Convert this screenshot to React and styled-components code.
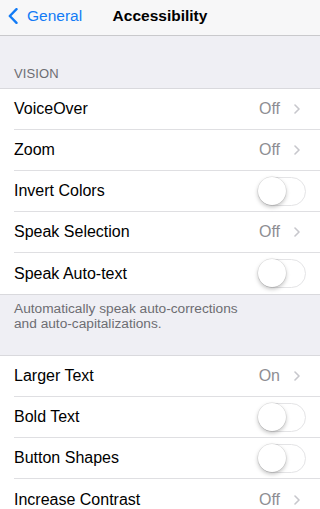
import React from "react";
import styled, { createGlobalStyle } from "styled-components";

const Global = createGlobalStyle`
  html, body { margin: 0; padding: 0; background: #efeff4; }
  body { font-family: "Liberation Sans", Arial, sans-serif; -webkit-font-smoothing: antialiased; }
  * { box-sizing: border-box; }
`;

const Screen = styled.div`
  width: 100%;
  height: 509px;
  overflow: hidden;
  background: #efeff4;
  display: flex;
  flex-direction: column;
  & > * { flex-shrink: 0; }
`;

const NavBar = styled.div`
  position: relative;
  height: 36px;
  background: #f7f7f8;
  border-bottom: 1px solid #c9c9cc;
  display: flex;
  align-items: center;
  padding: 0 0 3px 8px;
`;

const Back = styled.div`
  display: flex;
  align-items: center;
  gap: 9px;
  color: #127bf6;
  font-size: 15.5px;
`;

const Title = styled.div`
  position: absolute;
  left: 0;
  right: 0;
  top: 0;
  bottom: 3px;
  display: flex;
  align-items: center;
  justify-content: center;
  font-size: 15.5px;
  font-weight: bold;
  color: #000;
  pointer-events: none;
`;

const SectionHeader = styled.div`
  height: 52px;
  display: flex;
  align-items: flex-end;
  padding: 0 14px 7px;
  font-size: 13px;
  color: #6d6d72;
  letter-spacing: 0.1px;
`;

const Group = styled.div`
  background: #fff;
  border-top: 1px solid #d9d9dd;
  border-bottom: 1px solid #d9d9dd;
`;

const Row = styled.div`
  height: 41px;
  display: flex;
  align-items: center;
  padding-left: 14px;
`;

const RowInner = styled.div`
  flex: 1;
  height: 100%;
  display: flex;
  align-items: center;
  padding-right: 14px;
  border-bottom: ${(p) => (p.$last ? "none" : "1px solid #dfdfe2")};
`;

const Label = styled.div`
  flex: 1;
  font-size: 16px;
  color: #000;
`;

const Value = styled.div`
  font-size: 16px;
  color: #8e8e93;
  margin-right: 14px;
`;

const Chevron = styled.svg`
  width: 6px;
  height: 10px;
  margin-right: 6px;
  flex: none;
`;

const Toggle = styled.div`
  width: 48px;
  height: 29px;
  border-radius: 15px;
  border: 1.5px solid #e4e4e6;
  background: #fff;
  position: relative;
  flex: none;
`;

const Knob = styled.div`
  position: absolute;
  left: -1px;
  top: -1px;
  width: 28px;
  height: 28px;
  border-radius: 50%;
  background: #fff;
  box-shadow: 0 2px 4px rgba(0, 0, 0, 0.25), 0 0 0 0.5px rgba(0, 0, 0, 0.12);
`;

const Footer = styled.div`
  height: 60px;
  padding: 6px 14px 0;
  font-size: 13.7px;
  line-height: 15px;
  color: #6d6d72;
`;

const Disclosure = ({ value }) => (
  <>
    <Value>{value}</Value>
    <Chevron viewBox="0 0 6 10">
      <path d="M1 1l4 4-4 4" fill="none" stroke="#c7c7cc" strokeWidth="1.6" strokeLinecap="round" strokeLinejoin="round" />
    </Chevron>
  </>
);

const Switch = () => (
  <Toggle>
    <Knob />
  </Toggle>
);

const Item = ({ label, value, last }) => (
  <Row>
    <RowInner $last={last}>
      <Label>{label}</Label>
      {value ? <Disclosure value={value} /> : <Switch />}
    </RowInner>
  </Row>
);

const vision = [
  { label: "VoiceOver", value: "Off" },
  { label: "Zoom", value: "Off" },
  { label: "Invert Colors" },
  { label: "Speak Selection", value: "Off" },
  { label: "Speak Auto-text" },
];

const display = [
  { label: "Larger Text", value: "On" },
  { label: "Bold Text" },
  { label: "Button Shapes" },
  { label: "Increase Contrast", value: "Off" },
];

export default function App() {
  return (
    <Screen>
      <Global />
      <NavBar>
        <Back>
          <svg width="10" height="16" viewBox="0 0 10 16">
            <path d="M8.5 1.2L1.8 8l6.7 6.8" fill="none" stroke="#127bf6" strokeWidth="2.4" strokeLinecap="round" strokeLinejoin="round" />
          </svg>
          General
        </Back>
        <Title>Accessibility</Title>
      </NavBar>
      <SectionHeader>VISION</SectionHeader>
      <Group>
        {vision.map((it, i) => (
          <Item key={it.label} {...it} last={i === vision.length - 1} />
        ))}
      </Group>
      <Footer>
        Automatically speak auto-corrections
        <br />
        and auto-capitalizations.
      </Footer>
      <Group>
        {display.map((it, i) => (
          <Item key={it.label} {...it} last={i === display.length - 1} />
        ))}
      </Group>
    </Screen>
  );
}
